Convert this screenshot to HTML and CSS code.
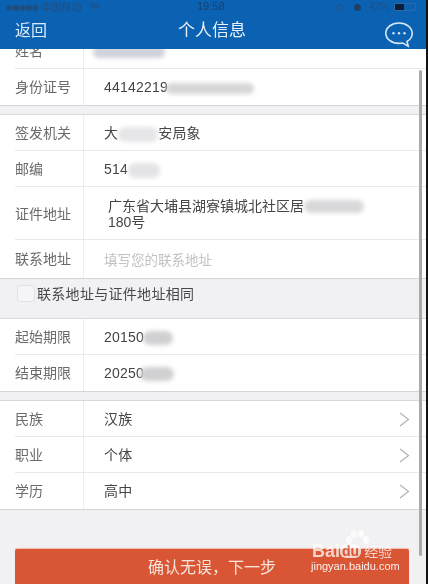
FILE: index.html
```html
<!DOCTYPE html>
<html lang="zh">
<head>
<meta charset="utf-8">
<title>个人信息</title>
<link rel="stylesheet" href="styles.css">
</head>
<body>
<div class="app">
  <header class="head">
    <div class="status">
      <div class="status-left"><span class="dots">●●●●●</span><span>中国移动</span>
        <svg class="wifi" width="12" height="8" viewBox="0 0 12 8"><path d="M1 3a7 7 0 0 1 10 0M3 5a4 4 0 0 1 6 0M5 7h2" fill="none" stroke="currentColor" stroke-width="1.2"/></svg>
      </div>
      <div class="clock">19:58</div>
      <div class="status-right"><span class="lock"></span><span class="moon"></span><span>42%</span><span class="batt"><span class="batt-fill"></span></span></div>
    </div>
    <nav class="nav">
      <span class="back">返回</span>
      <span class="title">个人信息</span>
      <svg class="chat" width="30" height="27" viewBox="0 0 30 27"><path d="M15 2C7.5 2 1.8 6.6 1.8 12.2S7.5 22.4 15 22.4c1.3 0 2.6-.1 3.8-.4l5.4 3.2-1.2-4.7c3.2-1.9 5.2-4.8 5.2-8.1C28.2 6.6 22.500 2 15 2Z" fill="none" stroke="#d5e6f5" stroke-width="1.600"/><circle cx="9.500" cy="12.200" r="1.200" fill="#d5e6f5"/><circle cx="15" cy="12.200" r="1.200" fill="#d5e6f5"/><circle cx="20.500" cy="12.200" r="1.200" fill="#d5e6f5"/></svg>
    </nav>
  </header>
  <main class="content">
    <section class="group first">
      <div class="row"><span class="label">姓名</span><span class="value"><span class="mask mask-name"></span></span></div>
      <div class="row"><span class="label">身份证号</span><span class="value">44142219<span class="mask mask-id"></span></span></div>
    </section>
    <section class="group">
      <div class="row"><span class="label">签发机关</span><span class="value">大<span class="mask mask-org"></span>安局象</span></div>
      <div class="row"><span class="label">邮编</span><span class="value">514<span class="mask mask-zip"></span></span></div>
      <div class="row row-tall"><span class="label">证件地址</span><span class="value value-addr"><span class="addr-line">广东省大埔县湖寮镇城北社区居<span class="mask mask-addr"></span></span><span class="addr-line">180号</span></span></div>
      <div class="row row-contact"><span class="label">联系地址</span><span class="value hint">填写您的联系地址</span></div>
    </section>
    <div class="same"><span class="check"></span><span>联系地址与证件地址相同</span></div>
    <section class="group group-dates">
      <div class="row"><span class="label">起始期限</span><span class="value">20150<span class="mask mask-date"></span></span></div>
      <div class="row"><span class="label">结束期限</span><span class="value">20250<span class="mask mask-date mask-date2"></span></span></div>
    </section>
    <section class="group">
      <div class="row"><span class="label">民族</span><span class="value">汉族</span><svg class="arrow" width="11" height="15" viewBox="0 0 11 15"><path d="M1 1l8.500 6.500L1 14" fill="none" stroke="#b5b5b8" stroke-width="1.300"/></svg></div>
      <div class="row"><span class="label">职业</span><span class="value">个体</span><svg class="arrow" width="11" height="15" viewBox="0 0 11 15"><path d="M1 1l8.500 6.500L1 14" fill="none" stroke="#b5b5b8" stroke-width="1.300"/></svg></div>
      <div class="row"><span class="label">学历</span><span class="value">高中</span><svg class="arrow" width="11" height="15" viewBox="0 0 11 15"><path d="M1 1l8.500 6.500L1 14" fill="none" stroke="#b5b5b8" stroke-width="1.300"/></svg></div>
    </section>
    <div class="action"><button class="next" type="button">确认无误，下一步</button></div>
  </main>
  <div class="scrollbar"></div>
  <div class="mark">
    <svg class="paw" width="24" height="20" viewBox="0 0 24 20"><g fill="#fff" fill-opacity=".7"><ellipse cx="4" cy="10" rx="3" ry="4"/><ellipse cx="9" cy="4" rx="3" ry="4"/><ellipse cx="16" cy="4" rx="3" ry="4"/><ellipse cx="21" cy="10" rx="3" ry="4"/></g></svg>
    <div class="mark-top"><span class="bai">Bai</span><span class="du">du</span><span class="jy">经验</span></div>
    <div class="mark-url">jingyan.baidu.com</div>
  </div>
</div>
</body>
</html>
```
FILE: styles.css
```css
* { box-sizing: border-box; }
html, body { margin: 0; height: 100%; background: #111; overflow: hidden; }
body { font-family: "Noto Sans CJK SC", "Liberation Sans", sans-serif; }
.app { position: relative; width: 426px; height: 584px; background: #f1f1f4; overflow: hidden; filter: blur(.5px); }
.head { height: 49px; background: #0b62b3; color: #fff; position: relative; z-index: 2; }
.status { height: 14px; display: flex; justify-content: space-between; align-items: center; padding: 0 10px 0 6px; font-size: 10px; line-height: 14px; color: #1c5088; position: relative; }
.status-left { display: flex; align-items: center; gap: 3px; }
.dots { font-size: 7px; letter-spacing: -.5px; color: #1f4f80; }
.wifi { margin-left: 4px; }
.clock { position: absolute; left: 197px; top: 0; font-size: 11px; line-height: 13px; font-family: "Liberation Sans", sans-serif; color: #17406f; }
.status-right { display: flex; align-items: center; gap: 5px; font-size: 10px; font-family: "Liberation Sans", sans-serif; }
.lock { width: 7px; height: 7px; border: 1px solid #1c5088; border-radius: 50%; margin-right: 6px; }
.moon { width: 7px; height: 7px; background: #1c4068; border-radius: 50%; margin-right: 3px; }
.batt { width: 22px; height: 8px; border: 1px solid #2f69a5; display: block; border-radius: 2px; }
.batt-fill { display: block; width: 9px; height: 100%; background: #111d33; }
.nav { height: 35px; display: flex; align-items: center; justify-content: space-between; padding: 0 12px 0 15px; position: relative; }
.back { font-size: 16px; line-height: 22px; color: #dcebf8; margin-bottom: 6px; }
.title { position: absolute; left: 178px; top: 3px; font-size: 17px; line-height: 24px; color: #e8f1f9; }
.chat { display: block; margin: 6px 0 0; }
.content { margin-top: -16px; }
.group { background: #fff; border-top: 1px solid #d9d9dc; border-bottom: 1px solid #d5d5d8; margin-bottom: 8px; }
.group.first { border-top: 0; }
.row { height: 36px; display: flex; align-items: center; padding-left: 15px; position: relative; }
.row + .row::before { content: ""; position: absolute; left: 15px; right: 0; top: -1px; height: 1px; background: #e9e9ec; }
.row-tall { height: 53px; }
.row-contact { height: 38px; }
.label { flex: 0 0 69px; height: 100%; display: flex; align-items: center; padding-bottom: 2px; font-size: 14px; color: #6a6a6d; border-right: 1px solid #eeeef0; white-space: nowrap; }
.value { margin-left: 20px; flex: 1; font-size: 14px; line-height: 18px; color: #454547; letter-spacing: .2px; white-space: nowrap; font-family: "Liberation Sans", "Noto Sans CJK SC", sans-serif; }
.hint { color: #c2c2c5; font-family: "Noto Sans CJK SC", sans-serif; font-size: 13.500px; letter-spacing: 0; }
.value-addr { margin-left: 24px; line-height: 16px; display: flex; flex-direction: column; letter-spacing: 0; }
.addr-line { display: block; }
.mask { display: inline-block; vertical-align: middle; border-radius: 7px; filter: blur(2px); }
.mask-name { width: 72px; height: 12px; margin-left: -11px; background: #d0d2dc; }
.mask-id { width: 88px; height: 11px; margin-left: -2px; background: #d6d6d6; }
.mask-org { width: 40px; height: 15px; background: #e6e6e9; }
.mask-zip { width: 32px; height: 15px; background: #e4e4e6; }
.mask-addr { width: 60px; height: 13px; background: #d8d8da; }
.mask-date { width: 30px; height: 14px; margin-left: -1px; background: #d0d0d2; }
.mask-date2 { width: 34px; margin-left: -4px; }
.same { height: 39px; margin-top: -8px; padding: 6px 0 0 17px; display: flex; align-items: flex-start; font-size: 14px; color: #48484a; letter-spacing: .3px; }
.same span:last-child { line-height: 17px; }
.check { width: 18px; height: 17px; margin-right: 2px; background: #f5f5f7; border: 1px solid #e2e2e5; border-radius: 3px; }
.arrow { position: absolute; right: 16px; top: 11px; }
.action { padding: 31px 17px 0 15px; }
.next { display: block; width: 100%; height: 40px; border: 0; border-radius: 2px; background: #d95635; color: #f6e4dc; font: 16px/20px "Noto Sans CJK SC", sans-serif; padding: 0 0 7px; text-align: center; box-shadow: 0 -1px 1px #f3b9a6; }
.scrollbar { position: absolute; right: 4px; top: 70px; width: 3px; height: 486px; background: #a9a9ab; border-radius: 2px; }
.mark { position: absolute; left: 309px; top: 530px; width: 100px; color: #fff; }
.paw { position: absolute; left: 36px; top: 0; }
.mark-top { position: absolute; left: 3px; top: 11px; display: flex; align-items: center; white-space: nowrap; font: bold 18px/20px "Liberation Sans", sans-serif; opacity: .75; }
.du { background: #fff; color: #d95635; border-radius: 6px; padding: 0 2px; font-size: 14px; line-height: 14px; }
.jy { font: 14px/16px "Noto Sans CJK SC", sans-serif; margin-left: 3px; }
.mark-url { position: absolute; left: 2px; top: 29px; white-space: nowrap; font: 11px/14px "Liberation Sans", sans-serif; opacity: .9; }
```
